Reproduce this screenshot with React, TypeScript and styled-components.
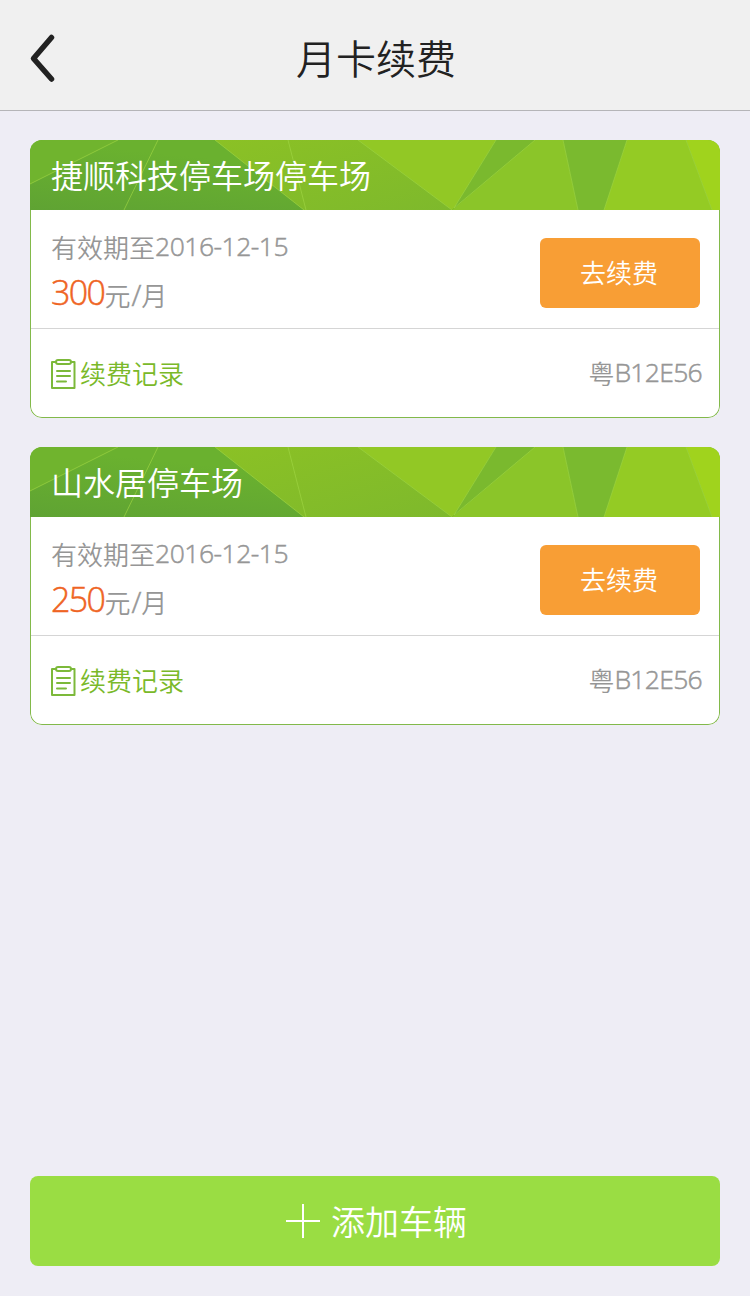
import React from 'react';
import styled, { createGlobalStyle } from 'styled-components';

const GlobalStyle = createGlobalStyle`
  * { box-sizing: border-box; }
  body {
    margin: 0;
    background: #eeedf5;
    font-family: "Open Sans", "Noto Sans CJK SC", sans-serif;
    font-weight: 350;
  }
  button { font: inherit; border: 0; padding: 0; cursor: pointer; }
`;

const cjk = '"Noto Sans CJK SC", sans-serif';

const Page = styled.div`
  min-height: 1296px;
  display: flex;
  flex-direction: column;
`;

const TopBar = styled.header`
  height: 111px;
  display: grid;
  grid-template-columns: 90px 1fr 90px;
  align-items: center;
  background: #f0f0f0;
  border-bottom: 1px solid #b5b5b8;
`;

const BackButton = styled.button`
  display: flex;
  padding: 5px 0 0 28px;
  background: none;
`;

const Title = styled.h1`
  margin: 4px 0 0 2px;
  text-align: center;
  font: 350 40px/60px ${cjk};
  color: #222;
`;

const CardList = styled.main`
  flex: 1;
  display: flex;
  flex-direction: column;
  gap: 29px;
  padding: 29px 30px 0;
`;

const Card = styled.section`
  height: 278px;
  border-radius: 12px;
  overflow: hidden;
  background: #fff;
  display: flex;
  flex-direction: column;
`;

const CardHeader = styled.div`
  height: 70px;
  display: grid;
  grid-template-rows: 70px;
  & > * { grid-area: 1 / 1; }
`;

const LotName = styled.h2`
  z-index: 1;
  margin: 0;
  padding-left: 21px;
  font: 350 32px/68px ${cjk};
  color: #fff;
`;

const CardBody = styled.div`
  flex: 1;
  border: 1px solid #82b94a;
  border-top: 0;
  border-radius: 0 0 12px 12px;
`;

const Plan = styled.div`
  height: 119px;
  display: flex;
  justify-content: space-between;
  align-items: flex-start;
  padding: 0 19px 0 20px;
  border-bottom: 1px solid #d5d5d5;
`;

const Details = styled.div`
  padding-top: 20px;
  color: #969696;
  font-size: 26px;
  white-space: nowrap;
`;

const Validity = styled.div`
  display: flex;
  height: 36px;
  line-height: 36px;
`;

const Price = styled.div`
  display: flex;
  align-items: flex-start;
  height: 50px;
  margin-top: 3px;
  line-height: 50px;
`;

const Digits = styled.span<{ $size?: number; $color?: string; $spacing?: number }>`
  margin-top: -2px;
  font-size: ${p => p.$size ?? 26.5}px;
  color: ${p => p.$color ?? 'inherit'};
  letter-spacing: ${p => p.$spacing ?? -0.5}px;
  -webkit-text-stroke: 0.5px currentColor;
`;

const Unit = styled.span`
  padding-top: 2px;
`;

const Slash = styled.span`
  font-size: 29px;
  line-height: 1;
  margin: 0 0 0 1px;
  -webkit-text-stroke: 0.5px currentColor;
`;

const RenewButton = styled.button`
  width: 160px;
  height: 70px;
  margin-top: 28px;
  padding: 0 2px 2px 0;
  border-radius: 6px;
  background: #f89e35;
  color: #fff;
  font: 350 26px/68px ${cjk};
`;

const Footer = styled.div`
  height: 88px;
  display: flex;
  justify-content: space-between;
  align-items: center;
  padding: 2px 17px 0 20px;
  font-size: 26px;
  color: #969696;
`;

const Plate = styled.span`
  display: flex;
  line-height: 36px;
`;

const RecordLink = styled.div`
  display: flex;
  align-items: center;
  gap: 4px;
  color: #7ab929;
  font: 350 26px/38px ${cjk};
`;

const RecordLabel = styled.span`
  padding-bottom: 2px;
`;

const BottomBar = styled.footer`
  padding: 0 30px 30px;
`;

const AddButton = styled.button`
  width: 100%;
  height: 90px;
  display: flex;
  align-items: center;
  justify-content: center;
  gap: 11px;
  padding-left: 3px;
  border-radius: 8px;
  background: #9add43;
  color: #fff;
  font: 350 34px/88px ${cjk};
`;

const AddLabel = styled.span`
  padding-bottom: 1px;
`;

const Facets = () => (
  <svg width="690" height="70" viewBox="0 0 690 70" aria-hidden="true">
    <defs>
      <linearGradient id="deep" x1="0" y1="1" x2="1" y2="0">
        <stop offset="0" stopColor="#5fa333" />
        <stop offset=".5" stopColor="#6ab12f" />
      </linearGradient>
      <linearGradient id="mid" x1="0" y1="0" x2="1" y2="1">
        <stop offset="0" stopColor="#8bc125" />
        <stop offset="1" stopColor="#7eb92c" />
      </linearGradient>
    </defs>
    <path d="M0 0H690V70H0Z" fill="url(#deep)" />
    <path d="M0 0H88L0 44Z" fill="#70b42e" />
    <path d="M185 0H328L422 70H274Z" fill="url(#mid)" />
    <path d="M328 0H466L425 67L422 70Z" fill="#92c825" />
    <path d="M466 0H505L424 68Z" fill="#7ab92e" />
    <path d="M505 0H533L548 70H422Z" fill="#8bc529" />
    <path d="M533 0H597L574 70H548Z" fill="#7aba2f" />
    <path d="M597 0H656L682 70H574Z" fill="#94cb24" />
    <path d="M656 0H690V70H682Z" fill="#a0d31d" />
    <g fill="none" stroke="#a0d643" strokeOpacity=".65">
      <path d="M88 0L0 44M128 0L94 70M185 0L274 70M258 0L276 70" />
      <path d="M328 0L422 70M466 0L424 68L505 0M533 0L548 70M597 0L574 70M656 0L682 70" />
    </g>
  </svg>
);

const Clipboard = () => (
  <svg width="25" height="32" viewBox="0 0 25 32" fill="none" stroke="#7cb93a" strokeWidth="2">
    <path d="M5 4H1V30H23.5V4H20" strokeLinejoin="round" />
    <rect x="5" y="2" width="15" height="4" rx="2" />
    <path d="M6 13H19M6 18H19M6 23.5H15" strokeLinecap="round" />
  </svg>
);

const lots = [
  { name: '捷顺科技停车场停车场', price: '300' },
  { name: '山水居停车场', price: '250' },
];

export default function App() {
  return (
    <Page>
      <GlobalStyle />
      <TopBar>
        <BackButton aria-label="返回">
          <svg width="30" height="50" viewBox="0 0 30 50" fill="none" stroke="#222" strokeWidth="5.5" strokeLinecap="round" strokeLinejoin="round">
            <path d="M23.5 4.5L5.5 25.5L23.5 46" />
          </svg>
        </BackButton>
        <Title>月卡续费</Title>
      </TopBar>
      <CardList>
        {lots.map(lot => (
          <Card key={lot.name}>
            <CardHeader>
              <Facets />
              <LotName>{lot.name}</LotName>
            </CardHeader>
            <CardBody>
              <Plan>
                <Details>
                  <Validity>有效期至<Digits>2016-12-15</Digits></Validity>
                  <Price>
                    <Digits $size={34} $color="#ef6424" $spacing={-1.6}>{lot.price}</Digits>
                    <Unit>元<Slash>/</Slash>月</Unit>
                  </Price>
                </Details>
                <RenewButton>去续费</RenewButton>
              </Plan>
              <Footer>
                <RecordLink><Clipboard /><RecordLabel>续费记录</RecordLabel></RecordLink>
                <Plate>粤<Digits $spacing={-0.7}>B12E56</Digits></Plate>
              </Footer>
            </CardBody>
          </Card>
        ))}
      </CardList>
      <BottomBar>
        <AddButton>
          <svg width="34" height="34" viewBox="0 0 34 34" stroke="#fff" strokeWidth="2">
            <path d="M17 0V34M0 17H34" />
          </svg>
          <AddLabel>添加车辆</AddLabel>
        </AddButton>
      </BottomBar>
    </Page>
  );
}
